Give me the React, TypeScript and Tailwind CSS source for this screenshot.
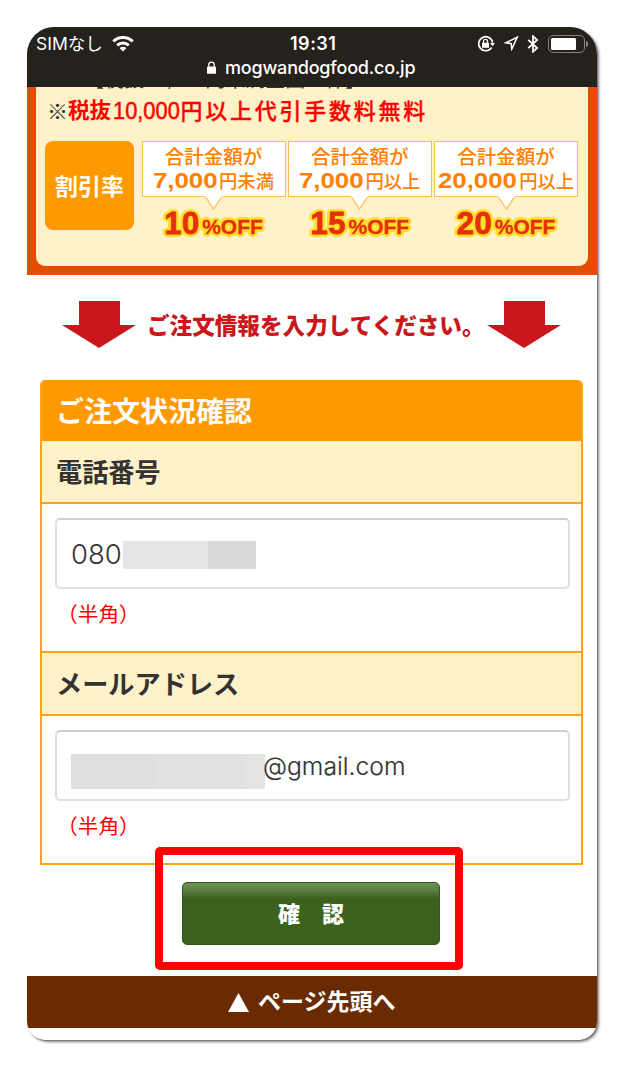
import React from "react";

const jp = "font-['Liberation_Sans','Noto_Sans_CJK_JP',sans-serif]";

function StatusBar() {
  return (
    <header className="h-[60px] bg-[#25211c] text-white font-['Inter','Noto_Sans_CJK_JP',sans-serif]">
      <div className="grid h-8 grid-cols-[263px_48px_1fr] items-center text-[18px] leading-8">
        <div className="flex items-center pl-[9px]">
          <span className="whitespace-nowrap text-[17.5px]">SIMなし</span>
          <svg className="ml-[9px] mt-[-1px] h-[17px] w-[22px]" viewBox="0 0 22 17" fill="none" stroke="#fff" strokeWidth="3">
            <path d="M1.3 6.3a14 14 0 0 1 19.4 0" />
            <path d="M5.2 10.4a8.4 8.4 0 0 1 11.6 0" />
            <path d="M11 16.5l-3.4-3.3a4.8 4.8 0 0 1 6.8 0z" fill="#fff" stroke="none" />
          </svg>
        </div>
        <span className="whitespace-nowrap pt-px font-semibold tracking-[0.5px]">19:31</span>
        <div className="flex items-center pl-[139px]">
          <svg className="h-[18px] w-[18px] shrink-0" viewBox="0 0 18 18" fill="none" stroke="#fff" strokeWidth="1.6">
            <path d="M15.6 7.5A7 7 0 1 0 14.6 12.5" />
            <path d="M13 8h5l-2.4 3.2z" fill="#fff" stroke="none" />
            <rect x="5" y="7.8" width="7" height="5" fill="#fff" stroke="none" />
            <path d="M6.5 8V6.4a2 2 0 0 1 4 0V8" strokeWidth="1.3" />
          </svg>
          <svg className="ml-[9px] h-[15px] w-[15px] shrink-0" viewBox="0 0 15 15" fill="none" stroke="#fff" strokeWidth="1.5">
            <path d="M13.2 1.3L1.8 6.8l5.4.8.6 5.4z" strokeLinejoin="miter" />
          </svg>
          <svg className="ml-[8px] h-[18px] w-[12px] shrink-0" viewBox="0 0 12 18" fill="none" stroke="#fff" strokeWidth="1.8">
            <path d="M1.2 4.8l9 8.2L6 16.7V1.3L10.2 5l-9 8.2" />
          </svg>
          <div className="ml-[9px] flex h-[18px] w-[37px] shrink-0 items-center rounded-[5px] border-[1.5px] border-[#85827f] pl-[2px]">
            <div className="h-3 w-[25px] rounded-[1.5px] bg-white" />
          </div>
          <div className="ml-[1px] h-[6px] w-[2px] rounded-r bg-[#85827f]" />
        </div>
      </div>
      <div className="flex h-4 items-center pl-[180px]">
        <svg className="h-[13px] w-[9px]" viewBox="0 0 10 14" fill="none">
          <rect x="0" y="6" width="10" height="8" rx="1" fill="#fff" />
          <path d="M2 6.5V4a3 3 0 0 1 6 0v2.5" stroke="#fff" strokeWidth="1.4" />
        </svg>
        <span className="ml-[9px] whitespace-nowrap pt-px text-[18px] font-medium leading-4 tracking-[-0.2px]">mogwandogfood.co.jp</span>
      </div>
    </header>
  );
}

const glow =
  "[text-shadow:3px_0_#ffdf2b,-3px_0_#ffdf2b,0_3px_#ffdf2b,0_-3px_#ffdf2b,2.1px_2.1px_#ffdf2b,-2.1px_2.1px_#ffdf2b,2.1px_-2.1px_#ffdf2b,-2.1px_-2.1px_#ffdf2b,2.8px_1.1px_#ffdf2b,-2.8px_1.1px_#ffdf2b,2.8px_-1.1px_#ffdf2b,-2.8px_-1.1px_#ffdf2b,0_0_4px_#ffdf2b]";

function Tier({ amount, amountWidth, unit, off }: { amount: string; amountWidth: string; unit: string; off: string }) {
  return (
    <div className="flex flex-col items-center">
      <div className="flex h-14 w-[144px] flex-col items-center border-[1.5px] border-[#ffbd59] bg-white pt-[3px] text-[#ff8000]">
        <div className="whitespace-nowrap text-[19.5px] font-medium leading-6">合計金額が</div>
        <div className="flex items-baseline whitespace-nowrap leading-6">
          <span className={`${amountWidth} shrink-0`}>
            <span className="inline-block origin-left scale-x-[1.2] text-[21.5px] font-bold leading-6">{amount}</span>
          </span>
          <span className="text-[18.3px] font-medium leading-6">{unit}</span>
        </div>
      </div>
      <svg className="relative -mt-[1.5px] h-[14px] w-[17px]" viewBox="0 0 17 14">
        <path d="M0 0h17v1.2L8.5 13.3 0 1.2z" fill="#fff" />
        <path d="M.5 1l8 12 8-12" fill="none" stroke="#ffbd59" strokeWidth="1.3" />
      </svg>
      <div className={`flex h-7 items-baseline whitespace-nowrap font-bold leading-7 text-[#e62e08] ${glow}`}>
        <span className="w-[38px] text-[31px] leading-7 tracking-[0.5px] [-webkit-text-stroke:0.8px_#e62e08]">{off}</span>
        <span className="text-[21px] leading-7 [-webkit-text-stroke:0.3px_#e62e08]">%OFF</span>
      </div>
    </div>
  );
}

function Promo() {
  return (
    <section className="h-[188px] bg-[#e54d00] px-[9px] pb-[9px]">
      <div className="h-[179px] overflow-hidden rounded-b-[9px] bg-[#fff2c8]">
        <div className="flex h-[54px] flex-col">
          <div className="h-[2px] overflow-hidden pl-12 text-[20px] leading-none text-[#333]">
            <div className="-mt-[17.5px] whitespace-nowrap">【税抜10,000円未満全国一律】</div>
          </div>
          <div className="flex h-[45px] items-center whitespace-nowrap pl-[11px] text-[#f00]">
            <span className="text-[21px] font-medium text-[#333]">※</span>
            <span className="text-[21.5px] font-bold">税抜</span>
            <span className="flex w-[69.5px] pl-[2px]">
              <span className="origin-left scale-x-[0.95] text-[23px] [-webkit-text-stroke:0.5px_#f00]">10,000</span>
            </span>
            <span className="text-[22px] font-medium tracking-[2.75px] [-webkit-text-stroke:0.3px_#f00]">円以上代引手数料無料</span>
          </div>
        </div>
        <div className="flex pl-[9px]">
          <div className="mr-[7.5px] flex h-[89px] w-[89px] items-center justify-center rounded-lg bg-[#f90] pt-[3px] text-[23px] font-bold text-white">割引率</div>
          <div className="flex gap-[2.3px]">
            <Tier amount="7,000" amountWidth="w-[66px]" unit="円未満" off="10" />
            <Tier amount="7,000" amountWidth="w-[66px]" unit="円以上" off="15" />
            <Tier amount="20,000" amountWidth="w-[81px]" unit="円以上" off="20" />
          </div>
        </div>
      </div>
    </section>
  );
}

function DownArrow() {
  return (
    <svg className="h-[48px] w-[74px] shrink-0" viewBox="0 0 74 48">
      <path d="M17 0h41v24h16L37 47 0 24h17z" fill="#c9171b" />
    </svg>
  );
}

function Field({ label, children }: { label: string; children: React.ReactNode }) {
  return (
    <>
      <div className="h-[63px] whitespace-nowrap border-b-2 border-[#ffa31f] bg-[#fff2c8] pl-[14px] text-[26.2px] font-bold leading-[65px] text-[#333]">{label}</div>
      <div className="h-[149px] border-b-2 border-[#ffa31f] pl-[13px] pr-[11px] pt-[14px]">
        <div className="flex h-[71px] items-center rounded-[5px] border-2 border-[#e0e0e0] border-t-[#cfcfcf] pl-[14px] text-[27px] text-[#333] font-['Inter',sans-serif]">{children}</div>
        <div className="pl-[2px] text-[20.7px] leading-[51px] text-[#f00]">（半角）</div>
      </div>
    </>
  );
}

export default function App() {
  return (
    <main className={`h-[1074px] w-[630px] overflow-hidden bg-white pl-[27px] pt-[27px] ${jp}`}>
      <div className="w-[569.5px] rounded-t-[27px] rounded-b-[19px] shadow-[1px_1px_1px_0px_#777,2px_2px_3px_0px_#888]">
        <div className="h-[1013px] overflow-hidden rounded-t-[27px] rounded-b-[19px] bg-white">
          <StatusBar />
          <Promo />
          <div className="flex h-[105px] items-start pl-[35px] pt-[26px]">
            <DownArrow />
            <div className="ml-[11px] w-[340px] whitespace-nowrap text-[22.6px] font-black leading-[51px] text-[#c9171b]">ご注文情報を入力してください。</div>
            <DownArrow />
          </div>
          <div className="ml-[13px] h-[485px] w-[543px] overflow-hidden rounded-t-[5px] border-x-2 border-[#ffa31f]">
            <h1 className="h-[61px] whitespace-nowrap bg-[#f90] pl-[14px] text-[28px] font-bold leading-[66px] text-white">ご注文状況確認</h1>
            <Field label="電話番号">
              <span className="w-[52px] pt-[3px] text-[27.5px] font-light">080</span>
              <span className="mt-[2px] h-7 w-[85px] bg-[#e5e5e5]" />
              <span className="mt-[2px] h-7 w-12 bg-[#dadada]" />
            </Field>
            <Field label="メールアドレス">
              <span className="mt-3 h-[35px] w-[86px] bg-[#dfdfdf]" />
              <span className="mt-3 h-[35px] w-[86px] bg-[#e1e1e1]" />
              <span className="mt-3 h-[35px] w-[22px] bg-[#e3e3e3]" />
              <span className="-ml-[2px] whitespace-nowrap pt-[2px] text-[24.7px] font-light [-webkit-text-stroke:0.2px_#333]">@gmail.com</span>
            </Field>
          </div>
          <div className="relative h-[111px] pl-[155px] pt-[17px]">
            <button className="flex h-[63px] w-[258px] items-center justify-center rounded-[5px] border border-[#2d5818] bg-[linear-gradient(#6e9159_0,#5c8247_7px,#3b631e_15px)] pt-[2px] text-[22px] font-black text-white">確　認</button>
            <div className="pointer-events-none absolute left-[128px] top-[-18px] h-[123px] w-[308px] rounded-[5px] border-8 border-[#f00]" />
          </div>
          <footer className="flex h-[52px] items-center bg-[#6a2b00] pl-[201px] text-white">
            <svg className="h-[19px] w-[21px]" viewBox="0 0 21 19"><path d="M10.5 0L21 19H0z" fill="currentColor" /></svg>
            <span className="ml-[9px] whitespace-nowrap text-[23px] font-bold">ページ先頭へ</span>
          </footer>
        </div>
      </div>
    </main>
  );
}
